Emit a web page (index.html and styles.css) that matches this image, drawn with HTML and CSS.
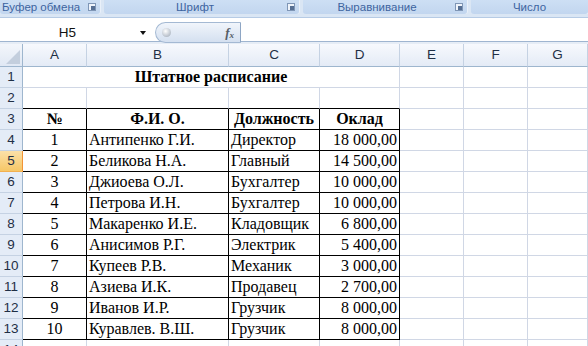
FILE: index.html
```html
<!DOCTYPE html>
<html lang="ru">
<head>
    <meta charset="UTF-8">
    <title>Штатное расписание</title>
    <link rel="stylesheet" href="styles.css">
</head>
<body>
    <div class="ribbon">
        <div class="group g-clip">Буфер обмена<span class="launcher"></span></div>
        <div class="group g-font">Шрифт<span class="launcher"></span></div>
        <div class="group g-align">Выравнивание<span class="launcher"></span></div>
        <div class="group g-num">Число</div>
    </div>

    <div class="formula-bar">
        <div class="name-box">
            <span class="name-text">H5</span>
            <span class="drop"></span>
        </div>
        <div class="fx-pill">
            <span class="fx-dot"></span>
            <span class="fx">f<sub>x</sub></span>
        </div>
        <div class="formula-input"></div>
    </div>

    <div class="sheet">
        <div class="corner"></div>
        <div class="col-h">A</div><div class="col-h">B</div><div class="col-h">C</div><div class="col-h">D</div>
        <div class="col-h">E</div><div class="col-h">F</div><div class="col-h">G</div>

        <div class="row-h">1</div>
        <div class="cell title span4">Штатное расписание</div>
        <div class="cell"></div><div class="cell"></div><div class="cell"></div>

        <div class="row-h">2</div>
        <div class="cell tb"></div><div class="cell tb"></div><div class="cell tb"></div><div class="cell tb"></div>
        <div class="cell"></div><div class="cell"></div><div class="cell"></div>

        <div class="row-h">3</div>
        <div class="cell t head">№</div><div class="cell t head">Ф.И. О.</div><div class="cell t head">Должность</div><div class="cell t head">Оклад</div>
        <div class="cell"></div><div class="cell"></div><div class="cell"></div>

        <div class="row-h">4</div>
        <div class="cell t num">1</div><div class="cell t">Антипенко Г.И.</div><div class="cell t">Директор</div><div class="cell t money">18 000,00</div>
        <div class="cell"></div><div class="cell"></div><div class="cell"></div>

        <div class="row-h active">5</div>
        <div class="cell t num">2</div><div class="cell t">Беликова Н.А.</div><div class="cell t">Главный</div><div class="cell t money">14 500,00</div>
        <div class="cell"></div><div class="cell"></div><div class="cell"></div>

        <div class="row-h">6</div>
        <div class="cell t num">3</div><div class="cell t">Джиоева О.Л.</div><div class="cell t">Бухгалтер</div><div class="cell t money">10 000,00</div>
        <div class="cell"></div><div class="cell"></div><div class="cell"></div>

        <div class="row-h">7</div>
        <div class="cell t num">4</div><div class="cell t">Петрова И.Н.</div><div class="cell t">Бухгалтер</div><div class="cell t money">10 000,00</div>
        <div class="cell"></div><div class="cell"></div><div class="cell"></div>

        <div class="row-h">8</div>
        <div class="cell t num">5</div><div class="cell t">Макаренко И.Е.</div><div class="cell t">Кладовщик</div><div class="cell t money">6 800,00</div>
        <div class="cell"></div><div class="cell"></div><div class="cell"></div>

        <div class="row-h">9</div>
        <div class="cell t num">6</div><div class="cell t">Анисимов Р.Г.</div><div class="cell t">Электрик</div><div class="cell t money">5 400,00</div>
        <div class="cell"></div><div class="cell"></div><div class="cell"></div>

        <div class="row-h">10</div>
        <div class="cell t num">7</div><div class="cell t">Купеев Р.В.</div><div class="cell t">Механик</div><div class="cell t money">3 000,00</div>
        <div class="cell"></div><div class="cell"></div><div class="cell"></div>

        <div class="row-h">11</div>
        <div class="cell t num">8</div><div class="cell t">Азиева И.К.</div><div class="cell t">Продавец</div><div class="cell t money">2 700,00</div>
        <div class="cell"></div><div class="cell"></div><div class="cell"></div>

        <div class="row-h">12</div>
        <div class="cell t num">9</div><div class="cell t">Иванов И.Р.</div><div class="cell t">Грузчик</div><div class="cell t money">8 000,00</div>
        <div class="cell"></div><div class="cell"></div><div class="cell"></div>

        <div class="row-h">13</div>
        <div class="cell t num">10</div><div class="cell t">Куравлев. В.Ш.</div><div class="cell t">Грузчик</div><div class="cell t money">8 000,00</div>
        <div class="cell"></div><div class="cell"></div><div class="cell"></div>

        <div class="row-h">14</div>
        <div class="cell"></div><div class="cell"></div><div class="cell"></div><div class="cell"></div>
        <div class="cell"></div><div class="cell"></div><div class="cell"></div>
    </div>
</body>
</html>
```

FILE: styles.css
```css
* {
    box-sizing: border-box;
    margin: 0;
    padding: 0;
}

body {
    width: 588px;
    height: 346px;
    overflow: hidden;
    background: #ffffff;
    font-family: 'Liberation Sans', Arial, sans-serif;
}

/* ribbon group captions */
.ribbon {
    display: flex;
    height: 18px;
    background: #dae6f4;
    border-bottom: 1px solid #b6cbe5;
}
.group {
    position: relative;
    height: 14px;
    background: linear-gradient(#cddff4, #c2d6ef);
    border-radius: 0 0 3px 3px;
    color: #3d64a0;
    font-size: 11.5px;
    line-height: 14px;
    text-align: center;
    margin-right: 4px;
    box-shadow: 1px 0 0 #e9f0f9;
}
.g-clip { width: 100px; text-align: left; padding-left: 2px; }
.g-font { width: 195px; padding-right: 13px; }
.g-align { width: 164px; padding-right: 16px; }
.g-num { width: 117px; margin-right: 0; }

.launcher {
    position: absolute;
    right: 4px;
    top: 3px;
    width: 8px;
    height: 8px;
    border: 1px solid #7f96b6;
    background: #eef3fa;
}
.launcher::after {
    content: '';
    position: absolute;
    right: 0;
    bottom: 0;
    width: 4px;
    height: 4px;
    background: #566f93;
}

/* name box and formula line */
.formula-bar {
    display: flex;
    align-items: flex-end;
    height: 26px;
    background: linear-gradient(#ffffff 23px, #9fb5d0 23px, #9fb5d0 24px, #e6edf6 24px);
}
.name-box {
    display: flex;
    align-items: center;
    width: 155px;
    height: 21px;
    margin-bottom: 1px;
    font-size: 13.5px;
    color: #111;
}
.name-text {
    width: 135px;
    text-align: center;
}
.drop {
    width: 0;
    height: 0;
    border-left: 3px solid transparent;
    border-right: 3px solid transparent;
    border-top: 4px solid #111;
    margin-left: 5px;
}
.fx-pill {
    display: flex;
    align-items: center;
    width: 86px;
    height: 21px;
    margin-bottom: 1px;
    background: linear-gradient(#f1f5fb, #d4e0f0);
    border: 1px solid #a4b9d3;
    border-right-color: #8ea6c4;
    border-radius: 11px 0 0 11px;
}
.fx-dot {
    width: 9px;
    height: 9px;
    margin-left: 6px;
    border-radius: 50%;
    background: radial-gradient(circle at 40% 35%, #ffffff, #b7bfca 70%, #9aa3ae);
}
.fx {
    margin-left: auto;
    margin-right: 6px;
    font-family: 'Liberation Serif', serif;
    font-style: italic;
    font-weight: bold;
    font-size: 13px;
    color: #555c66;
}
.fx sub {
    font-size: 9px;
    vertical-align: -1px;
}
.formula-input {
    flex: 1;
    height: 23px;
    align-self: flex-start;
}

/* worksheet grid */
.sheet {
    display: grid;
    grid-template-columns: 23px 64px 142px 91px 80px 64px 64px 1fr;
    grid-template-rows: 23px;
    grid-auto-rows: 21px;
}
.corner,
.col-h,
.row-h,
.cell {
    border-right: 1px solid #d0d7e5;
    border-bottom: 1px solid #d0d7e5;
}
.corner {
    position: relative;
    background: linear-gradient(#f3f6fb, #e0e8f4);
    border-right-color: #9eb6ce;
    border-bottom-color: #9eb6ce;
}
.corner::after {
    content: '';
    position: absolute;
    right: 2px;
    bottom: 2px;
    border-left: 14px solid transparent;
    border-bottom: 14px solid #c3cedd;
}
.col-h {
    background: linear-gradient(#f7f9fd, #e4ebf6);
    border-right-color: #c5d2e3;
    border-bottom-color: #9eb6ce;
    color: #1f2f45;
    font-size: 13.5px;
    line-height: 22px;
    text-align: center;
}
.row-h {
    background: #e4ecf7;
    border-right-color: #9eb6ce;
    border-bottom-color: #c5d2e3;
    color: #1f2f45;
    font-size: 13.5px;
    line-height: 20px;
    text-align: center;
}
.row-h.active {
    background: linear-gradient(#fbe0a8, #f6c767);
    border-right-color: #f29436;
    border-bottom-color: #f2b050;
}

.cell {
    font-family: 'Liberation Serif', 'Times New Roman', serif;
    font-size: 16px;
    line-height: 20px;
    color: #000;
    padding: 0 2px;
    white-space: nowrap;
}
.span4 {
    grid-column: span 4;
}
.title {
    font-weight: bold;
    text-align: center;
}
.t {
    border-right-color: #000;
    border-bottom-color: #000;
}
.tb {
    border-bottom-color: #000;
}
.head {
    font-weight: bold;
    text-align: center;
}
.num {
    text-align: center;
}
.money {
    text-align: right;
}
```
